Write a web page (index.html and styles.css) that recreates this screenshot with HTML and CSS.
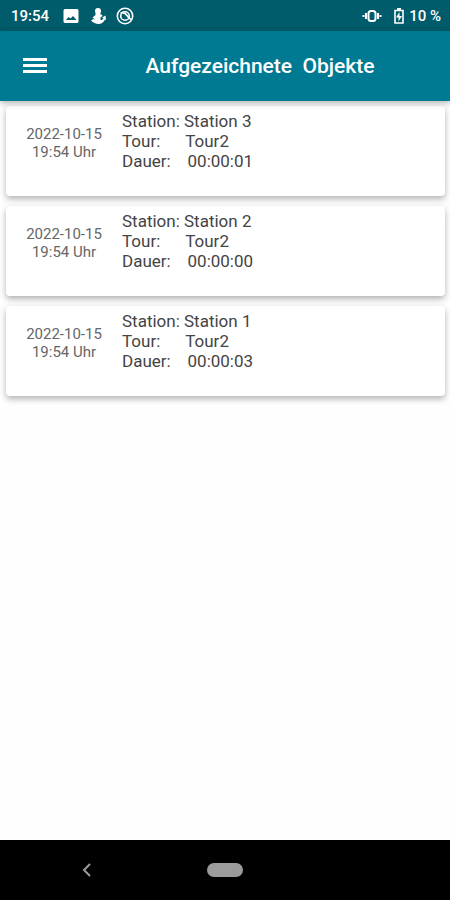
FILE: index.html
```html
<!DOCTYPE html>
<html lang="de">
<head>
  <meta charset="UTF-8" />
  <meta name="viewport" content="width=device-width, initial-scale=1.0" />
  <title>Aufgezeichnete Objekte</title>
  <link rel="stylesheet" href="styles.css">
</head>
<body>
  <div class="statusbar">
    <div class="status-left">
      <span class="clock">19:54</span>
      <svg class="status-icon" viewBox="0 0 18 18">
        <path fill="#fff" fill-rule="evenodd" d="M3 2h12a1.500 1.500 0 0 1 1.500 1.500v11A1.500 1.500 0 0 1 15 16H3a1.500 1.500 0 0 1-1.500-1.500v-11A1.500 1.500 0 0 1 3 2zM4 13h10.500l-3.500-4-2.500 2.500L6.500 10z"/>
      </svg>
      <svg class="status-icon" viewBox="0 0 18 18">
        <circle cx="9" cy="4" r="3" fill="#fff"/>
        <path fill="#fff" d="M6.500 6h5v1.500l2 .5-1 2h-1v3c1.500 0 2-.5 3-1.500l-1.500-1 3.500-2 .5 4.500-1-.5c-1.500 3-4 4.500-6.500 4.500S4 15.500 2 13.500l2.500-1.500L6 12.500 3.500 10.500l3-2.500z"/>
      </svg>
      <svg class="status-icon" viewBox="0 0 18 18" fill="none" stroke="#fff">
        <circle cx="9" cy="9" r="7.700" stroke-width="1.600"/>
        <circle cx="9" cy="9" r="4.300" stroke-width="1.600"/>
        <path stroke-width="1.800" d="M4.500 6c3-1 5 .5 6.500 2.500s2.500 3 4 4"/>
      </svg>
    </div>
    <div class="status-right">
      <svg class="vibrate" viewBox="0 0 20 18" fill="none" stroke="#fff">
        <rect x="6.500" y="4" width="7" height="10" rx="2.500" stroke-width="2"/>
        <path stroke-width="2" d="M4 6v6M16 6v6M1.500 8v2M18.500 8v2"/>
      </svg>
      <svg class="battery" viewBox="0 0 12 18">
        <path fill="none" stroke="#fff" stroke-width="1.600" d="M2 3.500h8v12.500H2z"/>
        <path fill="#fff" d="M4 1h4v2H4zM6.500 5v4H9l-3.500 5.500v-4H3z"/>
      </svg>
      <span class="percent">10 %</span>
    </div>
  </div>

  <header class="toolbar">
    <button class="menu-button" type="button" aria-label="Menü">
      <svg viewBox="0 0 24 18"><path fill="#fff" d="M0 1h24v3H0zM0 7h24v3H0zM0 13h24v3H0z"/></svg>
    </button>
    <h1>Aufgezeichnete  Objekte</h1>
  </header>

  <main class="liste">
    <article class="karte">
      <div class="datum">2022-10-15<br>19:54 Uhr</div>
      <div class="details">
        <p>Station: Station 3</p>
        <p>Tour:      Tour2</p>
        <p>Dauer:    00:00:01</p>
      </div>
    </article>
    <article class="karte">
      <div class="datum">2022-10-15<br>19:54 Uhr</div>
      <div class="details">
        <p>Station: Station 2</p>
        <p>Tour:      Tour2</p>
        <p>Dauer:    00:00:00</p>
      </div>
    </article>
    <article class="karte">
      <div class="datum">2022-10-15<br>19:54 Uhr</div>
      <div class="details">
        <p>Station: Station 1</p>
        <p>Tour:      Tour2</p>
        <p>Dauer:    00:00:03</p>
      </div>
    </article>
  </main>

  <nav class="navbar">
    <button class="back" type="button" aria-label="Zurück">
      <svg viewBox="0 0 10 16"><path fill="none" stroke="#9b9b9b" stroke-width="2" d="M8 2L2 8l6 6"/></svg>
    </button>
    <button class="home" type="button" aria-label="Startbildschirm"></button>
  </nav>
</body>
</html>
```

FILE: styles.css
```css
* {
  box-sizing: border-box;
}
body {
  font-family: Roboto, sans-serif;
  background: #fefefe;
  margin: 0;
  min-height: 100vh;
  display: flex;
  flex-direction: column;
  color: #444;
}
button {
  border: 0;
  padding: 0;
  background: none;
  cursor: pointer;
}
svg {
  display: block;
}
.statusbar {
  display: flex;
  justify-content: space-between;
  align-items: center;
  height: 31px;
  padding: 0 9px 0 11px;
  background: #005b6b;
  color: #fff;
  font-size: 15px;
  font-weight: 500;
}
.status-left {
  display: flex;
  align-items: center;
  gap: 9px;
}
.clock {
  margin-right: 4px;
}
.status-icon {
  width: 18px;
  height: 18px;
}
.status-right {
  display: flex;
  align-items: center;
}
.vibrate {
  width: 20px;
  height: 18px;
  margin-right: 11px;
}
.battery {
  width: 12px;
  height: 18px;
  margin-right: 4px;
}
.toolbar {
  display: grid;
  grid-template-columns: 70px 1fr;
  align-items: center;
  height: 70px;
  background: #007a93;
  color: #fff;
  box-shadow: 0 2px 6px rgba(0, 0, 0, 0.3);
  z-index: 1;
}
.menu-button {
  justify-self: center;
}
.menu-button svg {
  width: 24px;
  height: 18px;
}
.toolbar h1 {
  margin: 0;
  font-size: 21px;
  font-weight: 500;
  text-align: center;
  white-space: pre;
}
.liste {
  flex: 1;
  display: flex;
  flex-direction: column;
  gap: 10px;
  padding: 5px 5px 10px 6px;
}
.karte {
  display: grid;
  grid-template-columns: 116px 1fr;
  height: 90px;
  background: #fff;
  border-radius: 4px;
  box-shadow: 0 3px 6px rgba(0, 0, 0, 0.3);
}
.datum {
  padding-top: 19px;
  font-size: 15px;
  line-height: 18px;
  text-align: center;
  color: #666;
}
.details {
  padding-top: 5px;
  font-size: 17px;
  line-height: 20px;
}
.details p {
  margin: 0;
  white-space: pre;
}
.navbar {
  display: grid;
  grid-template-columns: 1fr auto 1fr;
  align-items: center;
  height: 60px;
  background: #000;
}
.back {
  justify-self: center;
  padding-right: 34px;
}
.back svg {
  width: 10px;
  height: 16px;
}
.home {
  width: 36px;
  height: 14px;
  border-radius: 7px;
  background: #9b9b9b;
}
```
